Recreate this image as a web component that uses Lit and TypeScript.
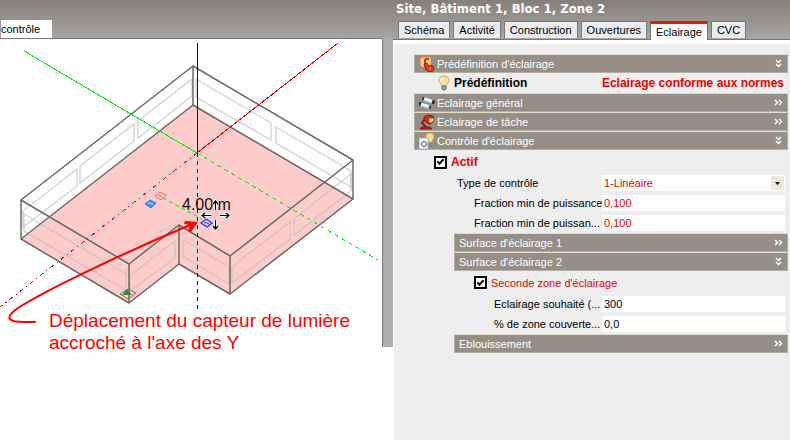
import { LitElement, html, svg, css } from "lit";
import { customElement, property, state } from "lit/decorators.js";

type Pt = [number, number];
const pts = (list: Pt[]) => list.map((p) => p.join(",")).join(" ");

/* Building geometry, in canvas units */
const TOP: Pt[] = [[193, 66], [353, 160], [230, 256], [179, 225], [129, 264], [21, 200]];
const BASE: Pt[] = [[193, 105], [353, 199], [230, 294], [179, 264], [129, 303], [21, 239]];
const WINDOWS: Pt[][] = [
  [[192, 79], [192, 96], [138, 138], [138, 121]],
  [[134, 124], [134, 141], [80, 183], [80, 166]],
  [[77, 169], [77, 186], [23, 227], [23, 211]],
  [[24, 214], [126, 274], [126, 290], [24, 231]],
  [[130, 276], [175, 241], [175, 258], [130, 291]],
  [[183, 240], [229, 267], [229, 284], [183, 256]],
  [[232, 267], [290, 222], [290, 239], [232, 283]],
  [[294, 219], [351, 174], [351, 191], [294, 235]],
  [[196, 79], [271, 123], [271, 140], [196, 97]],
  [[276, 127], [351, 171], [351, 187], [276, 143]],
];

const ICONS: Record<string, unknown> = {
  preset: svg`
    <path d="M1 3 3 1h8l1 1v7l-2 2H3L1 9z" fill="#fbd58a" stroke="#d98a2c"/>
    <path d="M10 3H7L6 4v4" fill="none" stroke="#d8301a" stroke-width="2"/>
    <path d="M5 8l3-1 2 3 3-1 2 2-1 4-3 1-4-2z" fill="#e8391a" stroke="#a01c0a"/>
    <path d="M10 12l2 1" stroke="#ffb27d"/>`,
  bulb: svg`
    <path d="M8 1c-3 0-5 2-5 4 0 3 2 3 3 6h4c1-3 3-3 3-6 0-2-2-4-5-4z" fill="#ffe39a" stroke="#e09a68"/>
    <path d="M5 6c0-2 1-3 3-3" fill="none" stroke="#fffbe0" stroke-width="2"/>
    <path d="M6 11h4v3l-1 1H7l-1-1z" fill="#98a8ae" stroke="#66757d"/>`,
  tubes: svg`
    <path d="M5 4l9 3M1 9l9 3" stroke="#2b3440" stroke-width="4" stroke-linecap="round"/>
    <path d="M5 4l8 2.700M2 9.300l8 2.700" stroke="#eef5fd" stroke-width="4"/>
    <path d="M5 5.500l8 2.700M2 10.800l8 2.700" stroke="#a9bfd6"/>`,
  lamp: svg`
    <path d="M6 5L3 9l4 4" fill="none" stroke="#8c1a0a" stroke-width="2"/>
    <path d="M5 3l4-2 5 1 1 4-3 4-4-1-3-3z" fill="#cf3216" stroke="#7d1408"/>
    <path d="M10 5l4-1 1 2-3 3-2-1z" fill="#ffd08a"/>
    <path d="M3 13h8l2 2H1z" fill="#c22a12" stroke="#7d1408"/>`,
  control: svg`
    <path d="M11 0C8 0 7 2 7 4c0 2 2 3 2 5h4c0-2 2-3 2-5 0-2-1-4-4-4z" fill="#ffe08a" stroke="#e0a040"/>
    <path d="M9 10h4v3H9z" fill="#78868f"/>
    <path d="M0 5h9v11H0z" fill="#f4f8ff" stroke="#9fb0cc"/>
    <circle cx="5" cy="11" r="2.500" fill="#fff" stroke="#45536b"/>`,
};

@customElement("section-bar")
class SectionBar extends LitElement {
  @property() label = "";
  @property() icon = "";
  @property({ type: Boolean }) open = false;

  static styles = css`
    :host { display: block; margin-right: 2px; }
    button {
      display: flex; align-items: center; box-sizing: border-box;
      width: 100%; height: 19px; margin: 0; padding: 0 4px;
      border: 1px solid; border-color: #e2e0cc #b4b09f #b4b09f #b0ac9c;
      background: #958f87; color: #fff; font: inherit; text-align: left;
    }
    .icon { width: 16px; height: 16px; margin-right: 2px; }
    .label { flex: 1; white-space: nowrap; }
    .chevron { width: 9px; height: 9px; fill: none; stroke: #fff; stroke-width: 1.5; }
  `;

  render() {
    return html`<button type="button" aria-expanded=${this.open}>
      ${this.icon ? html`<svg class="icon" viewBox="0 0 16 16">${ICONS[this.icon]}</svg>` : null}
      <span class="label">${this.label}</span>
      <svg class="chevron" viewBox="0 0 9 9">
        <path d=${this.open ? "M2 1l2.5 2.5L7 1M2 5l2.5 2.5L7 5" : "M1 2l2.5 2.5L1 7M5 2l2.5 2.5L5 7"} />
      </svg>
    </button>`;
  }
}

@customElement("building-view")
class BuildingView extends LitElement {
  static styles = css`
    :host { display: block; }
    svg { display: block; width: 100%; overflow: visible; }
    .floor { fill: #ffcccc; }
    .edge { fill: none; stroke: #6b6767; stroke-width: 1.5; stroke-linejoin: round; }
    .window { fill: none; stroke: #bdbdbd; stroke-opacity: 0.65; stroke-width: 1.4; }
    .axis { fill: none; stroke-width: 1; shape-rendering: crispEdges; }
    .x { stroke: #f00000; }
    .y { stroke: #00f000; }
    .z { stroke: #0000c8; }
    .dash { stroke-dasharray: 4 4; }
    .dot { stroke-dasharray: 4 4 1 4; }
    .link { stroke: #4be04b; stroke-width: 1.4; stroke-dasharray: 4 3; }
    .arrow { fill: none; stroke: #ff0000; stroke-width: 2; stroke-linecap: round; }
    .head { fill: #ff0000; }
    .measure { font: 16px "Liberation Sans", Arial, sans-serif; fill: #111; }
    .note { font: 19px "Liberation Sans", Arial, sans-serif; fill: #ff0000; }
    .halo { fill: none; stroke: #fff; stroke-width: 3; }
    .move { fill: none; stroke: #000; stroke-width: 1.2; }
  `;

  render() {
    const move =
      "M215.500 210V201M213 204l2.500-3 2.500 3M215.500 220V229M213 226l2.500 3 2.500-3M211 215.500H202M205 213l-3 2.500 3 2.500M220 215.500H229M226 213l3 2.500-3 2.500";
    return html`<svg viewBox="0 39 382 308" role="img" aria-label="Vue 3D">
      <polygon class="floor" points=${pts(BASE)} />
      ${WINDOWS.map((w) => svg`<polygon class="window" points=${pts(w)} />`)}
      <polygon class="edge" points=${pts(BASE)} />
      <polygon class="edge" points=${pts(TOP)} />
      ${TOP.map((p, i) => svg`<polyline class="edge" points=${pts([p, BASE[i]])} />`)}

      <path class="axis y" d="M24 51L197 153" />
      <path class="axis y dash" d="M197 153L378 260" />
      <path class="axis x" d="M197 153L338 43" />
      <path class="axis x dot" d="M197 153L0 307" />
      <path class="axis z" d="M197.500 43V153" />
      <path class="axis z dash" d="M197.500 153V309" />

      <path class="link" d="M163 198L202 219" />
      <path d="M155 196l5-4 6 3-5 5z" fill="#ffc4c4" stroke="#e87070" />
      <path d="M158 195l4 2" stroke="#e87070" />
      <path d="M145 204l5-4 6 3-5 5z" fill="#4a94ee" stroke="#2d7be0" />
      <path d="M148 203l5 1" stroke="#bfe0ff" />
      <path d="M201 223l5-4 6 4-5 4z" fill="#d9d0ff" stroke="#3a36f0" stroke-width="1.400" />
      <path d="M204 222l5 2" stroke="#3a36f0" />
      <path d="M120 294l8-5 8 4-8 6z" fill="none" stroke="#8b6a6a" />
      <path d="M122 295l5-6 5 6z" fill="#2f8f2f" />

      <text class="measure" x="182" y="210">4.00 m</text>
      <path class="halo" d=${move} />
      <path class="move" d=${move} />

      <path class="arrow" d="M35 322H24C8 322 6 318 14 311C32 297 112 258 190 225" />
      <path class="head" d="M198 222L185 221L184 224L190 225L188 231L191 232Z" />
      <text class="note" x="49" y="327">Déplacement du capteur de lumière</text>
      <text class="note" x="49" y="349">accroché à l'axe des Y</text>
    </svg>`;
  }
}

@customElement("app-root")
class AppRoot extends LitElement {
  @state() private tabs = ["Schéma", "Activité", "Construction", "Ouvertures", "Eclairage", "CVC"];

  static styles = css`
    :host {
      display: block;
      font: 11px/16px "Liberation Sans", Arial, sans-serif;
      color: #000; background: #fff;
    }
    .app {
      display: grid; grid-template-columns: 393fr 397fr; min-height: 100vh;
      background: linear-gradient(#857f78, #a9a8a7 40px, transparent 40px);
    }
    .scene-head { display: flex; align-items: flex-end; height: 38px; padding-left: 1px; }
    .scene-tab {
      height: 18px; margin: 0; padding: 0 12px 2px 0; border: 0; border-top: 1px solid #fff;
      background: #fff; font: inherit; color: #000;
    }
    .scene { display: grid; grid-template-columns: 1fr 11px; background: #fff; }
    .canvas { border-top: 1px solid #777; }
    .gutter { background: #adadad; border-left: 1px solid #777; }
    .panel { display: flex; flex-direction: column; min-width: 0; }
    h1 {
      margin: 0; padding: 0 3px; height: 21px; box-sizing: border-box;
      font: bold 13px/17px "DejaVu Sans Condensed", Verdana, sans-serif;
      color: #fff; white-space: nowrap;
    }
    .tabs { display: flex; gap: 3px; padding-left: 5px; border-bottom: 1px solid #777; height: 18px; }
    .tab {
      box-sizing: border-box; height: 18px; margin: 0; padding: 0 5px;
      border: 1px solid; border-color: #777 #777 transparent #777;
      background: #ebecf0; background-clip: padding-box; font: inherit; color: #000; white-space: nowrap;
    }
    .tab.active { height: 19px; padding-bottom: 3px; border-top: 3px solid #f51400; border-bottom: 0; background: #fff; }
    .body {
      flex: 1; padding: 10px 0 16px 20px; background: #eee;
      border-top: 4px solid #fff; border-left: 1px solid #fff;
    }
    .nested { margin-left: 40px; }
    .preset { display: flex; align-items: center; height: 20px; padding: 0 6px 0 22px; font-weight: bold; font-size: 12px; }
    .preset svg { width: 16px; height: 16px; margin-right: 2px; }
    .value { margin-left: auto; }
    .red { color: #f00000; }
    .check { display: flex; align-items: center; gap: 4px; height: 24px; padding-left: 20px; }
    .check.strong { font-weight: bold; font-size: 12px; }
    .check.inner { height: 23px; }
    .check input {
      appearance: none; width: 13px; height: 13px; margin: 0; border: 2px solid #000;
      background: #fff; display: grid; place-items: center;
    }
    .check input:checked::before {
      content: ""; width: 5px; height: 2px; margin-bottom: 2px;
      border-left: 2px solid #000; border-bottom: 2px solid #000; transform: rotate(-45deg);
    }
    .rows { display: grid; gap: 4px; padding: 1px 5px 2px 0; }
    .rows.last { padding-top: 2px; }
    .row { display: grid; grid-template-columns: 188px 1fr; }
    .row label { padding: 1px 0 0 43px; line-height: 15px; white-space: nowrap; }
    .row.deep label { padding-left: 60px; }
    .row.deeper label { padding-left: 80px; }
    .field { display: flex; position: relative; min-width: 0; }
    .field input, .field select {
      appearance: none; box-sizing: border-box; width: 100%; height: 16px; margin: 0;
      padding: 0 2px; border: 0; border-radius: 0; background: #fff; font: inherit; color: #00001e;
    }
    .field .red { color: #f00000; }
    .arrow {
      position: absolute; right: 1px; top: 1px; width: 13px; height: 14px;
      background: #ece9d8; pointer-events: none;
    }
  `;

  private field(id: string, label: string, value: string, depth: string, red: boolean) {
    return html`<div class="row ${depth}">
      <label for=${id}>${label}</label>
      <span class="field"><input id=${id} class=${red ? "red" : ""} .value=${value} /></span>
    </div>`;
  }

  render() {
    return html`<div class="app">
      <div>
        <div class="scene-head"><button class="scene-tab" type="button">contrôle</button></div>
        <div class="scene">
          <building-view class="canvas"></building-view>
          <div class="gutter"></div>
        </div>
      </div>
      <main class="panel">
        <h1>Site, Bâtiment 1, Bloc 1, Zone 2</h1>
        <div class="tabs" role="tablist">
          ${this.tabs.map((t) => {
            const on = t === "Eclairage";
            return html`<button type="button" role="tab" class="tab ${on ? "active" : ""}" aria-selected=${on}>${t}</button>`;
          })}
        </div>
        <div class="body">
          <section-bar icon="preset" label="Prédéfinition d'éclairage" open></section-bar>
          <div class="preset">
            <svg viewBox="0 0 16 16">${ICONS.bulb}</svg>
            <span>Prédéfinition</span>
            <span class="value red">Eclairage conforme aux normes</span>
          </div>
          <section-bar icon="tubes" label="Eclairage général"></section-bar>
          <section-bar icon="lamp" label="Eclairage de tâche"></section-bar>
          <section-bar icon="control" label="Contrôle d'éclairage" open></section-bar>
          <label class="check strong red"><input type="checkbox" checked />Actif</label>
          <div class="rows">
            <div class="row">
              <label for="kind">Type de contrôle</label>
              <span class="field">
                <select id="kind" class="red"><option>1-Linéaire</option></select>
                <svg class="arrow" viewBox="0 0 13 14"><path d="M4 6h5l-2.500 3z" /></svg>
              </span>
            </div>
            ${this.field("min1", "Fraction min de puissance", "0,100", "deep", true)}
            ${this.field("min2", "Fraction min de puissan...", "0,100", "deep", true)}
          </div>
          <div class="nested">
            <section-bar label="Surface d'éclairage 1"></section-bar>
            <section-bar label="Surface d'éclairage 2" open></section-bar>
            <label class="check inner red"><input type="checkbox" checked />Seconde zone d'éclairage</label>
          </div>
          <div class="rows last">
            ${this.field("lux", "Eclairage souhaité (...", "300", "deeper", false)}
            ${this.field("cover", "% de zone couverte...", "0,0", "deeper", false)}
          </div>
          <div class="nested"><section-bar label="Eblouissement"></section-bar></div>
        </div>
      </main>
    </div>`;
  }
}
